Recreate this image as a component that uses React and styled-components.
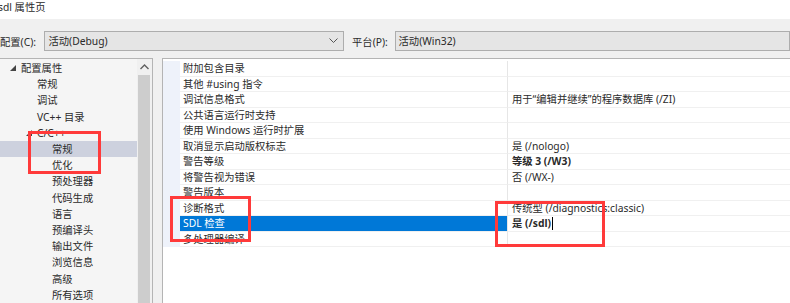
import styled, { createGlobalStyle } from "styled-components";

const GlobalStyle = createGlobalStyle`
  html, body {
    margin: 0;
    padding: 0;
    background: #f0f0f0;
    overflow: hidden;
  }
  body {
    font-family: "Noto Sans", "Noto Sans CJK SC", sans-serif;
    font-size: 10.3px;
    color: #2a2a2a;
  }
`;

const Window = styled.div`
  position: relative;
  width: 790px;
  height: 303px;
  overflow: hidden;
  background: #f0f0f0;
`;

const TitleBar = styled.div`
  height: 19px;
  background: #fff;
  line-height: 14px;
  text-indent: -2px;
  white-space: nowrap;
`;

const ConfigRow = styled.div`
  display: flex;
  align-items: center;
  margin-top: 12px;
  height: 20px;
`;

const Label = styled.div`
  width: ${(p) => p.$w}px;
  padding-left: ${(p) => p.$pad || 0}px;
  box-sizing: border-box;
  white-space: nowrap;
`;

const Combo = styled.div`
  position: relative;
  box-sizing: border-box;
  width: ${(p) => p.$w}px;
  height: 20px;
  border: 1px solid #adadad;
  background: #e5e5e5;
  line-height: 18px;
  padding-left: 3px;
  white-space: nowrap;
`;

const Chevron = styled.svg`
  position: absolute;
  right: 5px;
  top: 6px;
`;

const Main = styled.div`
  display: flex;
  margin-top: 7px;
  height: 260px;
`;

const TreePanel = styled.div`
  display: flex;
  width: 153px;
  box-sizing: border-box;
  border-top: 1px solid #b4b4b4;
  border-right: 1px solid #b4b4b4;
  background: #f5f5f5;
`;

const TreeList = styled.div`
  flex: 1;
  padding-top: 1px;
`;

const TreeItem = styled.div`
  display: flex;
  align-items: center;
  height: 16.2px;
  padding-left: ${(p) => p.$indent}px;
  background: ${(p) => (p.$selected ? "#cdd1de" : "transparent")};
  white-space: nowrap;
  line-height: 16px;
`;

const Arrow = styled.svg`
  margin-left: -11px;
  margin-right: 5px;
`;

const ScrollBar = styled.div`
  display: flex;
  flex-direction: column;
  width: 15px;
  background: #f0f0f0;
`;

const ScrollBtn = styled.div`
  height: 16px;
  display: flex;
  align-items: center;
  justify-content: center;
`;

const Thumb = styled.div`
  flex: 1;
  margin: 0 2px 0 1px;
  background: #cdcdcd;
`;

const GridPanel = styled.div`
  flex: 1;
  margin-left: 9px;
  border-top: 1px solid #b4b4b4;
  border-left: 1px solid #b4b4b4;
  background: #fff;
  padding-top: 2px;
`;

const Row = styled.div`
  display: grid;
  grid-template-columns: 17px 328px 1fr;
  height: 15.5px;
  line-height: 15px;
`;

const Margin = styled.div`
  background: #eef2fa;
`;

const NameCell = styled.div`
  padding-left: 3px;
  border-bottom: 1px solid #f0f0f0;
  border-right: 1px solid #e6e6e6;
  background: ${(p) => (p.$selected ? "#0078d7" : "#fff")};
  color: ${(p) => (p.$selected ? "#fff" : "#2a2a2a")};
  white-space: nowrap;
  overflow: hidden;
`;

const ValueCell = styled.div`
  padding-left: 4px;
  border-bottom: 1px solid #f0f0f0;
  font-weight: ${(p) => (p.$bold ? 700 : 400)};
  white-space: nowrap;
  overflow: hidden;
`;

const Caret = styled.span`
  display: inline-block;
  width: 1px;
  height: 13px;
  background: #000;
  vertical-align: -3px;
  margin-left: 1px;
`;

const Mark = styled.div`
  position: absolute;
  left: ${(p) => p.$x}px;
  top: ${(p) => p.$y}px;
  width: ${(p) => p.$w}px;
  height: ${(p) => p.$h}px;
  box-sizing: border-box;
  border: 3px solid #ff3a3a;
  pointer-events: none;
`;

const tree = [
  { text: "配置属性", indent: 21, open: true },
  { text: "常规", indent: 37 },
  { text: "调试", indent: 37 },
  { text: "VC++ 目录", indent: 37 },
  { text: "C/C++", indent: 37, open: true },
  { text: "常规", indent: 52, selected: true },
  { text: "优化", indent: 52 },
  { text: "预处理器", indent: 52 },
  { text: "代码生成", indent: 52 },
  { text: "语言", indent: 52 },
  { text: "预编译头", indent: 52 },
  { text: "输出文件", indent: 52 },
  { text: "浏览信息", indent: 52 },
  { text: "高级", indent: 52 },
  { text: "所有选项", indent: 52 },
];

const props = [
  { name: "附加包含目录", value: "" },
  { name: "其他 #using 指令", value: "" },
  { name: "调试信息格式", value: "用于“编辑并继续”的程序数据库 (/ZI)" },
  { name: "公共语言运行时支持", value: "" },
  { name: "使用 Windows 运行时扩展", value: "" },
  { name: "取消显示启动版权标志", value: "是 (/nologo)" },
  { name: "警告等级", value: "等级 3 (/W3)", bold: true },
  { name: "将警告视为错误", value: "否 (/WX-)" },
  { name: "警告版本", value: "" },
  { name: "诊断格式", value: "传统型 (/diagnostics:classic)" },
  { name: "SDL 检查", value: "是 (/sdl)", bold: true, selected: true },
  { name: "多处理器编译", value: "" },
];

export default function App() {
  return (
    <>
      <GlobalStyle />
      <Window>
        <TitleBar>sdl 属性页</TitleBar>
        <ConfigRow>
          <Label $w={45}>配置(C):</Label>
          <Combo $w={303}>
            活动(Debug)
            <Chevron width="9" height="6" viewBox="0 0 9 6">
              <path d="M0.5 0.5 L4.5 4.5 L8.5 0.5" fill="none" stroke="#555" strokeWidth="1" />
            </Chevron>
          </Combo>
          <Label $w={51} $pad={8}>平台(P):</Label>
          <Combo $w={400}>活动(Win32)</Combo>
        </ConfigRow>
        <Main>
          <TreePanel>
            <TreeList>
              {tree.map((t, i) => (
                <TreeItem key={i} $indent={t.indent} $selected={t.selected}>
                  {t.open && (
                    <Arrow width="6" height="6" viewBox="0 0 6 6">
                      <path d="M6 0 L6 6 L0 6 Z" fill="#444" />
                    </Arrow>
                  )}
                  {t.text}
                </TreeItem>
              ))}
            </TreeList>
            <ScrollBar>
              <ScrollBtn>
                <svg width="9" height="6" viewBox="0 0 9 6">
                  <path d="M0.5 5 L4.5 1 L8.5 5" fill="none" stroke="#606060" strokeWidth="1.4" />
                </svg>
              </ScrollBtn>
              <Thumb />
            </ScrollBar>
          </TreePanel>
          <GridPanel>
            {props.map((p, i) => (
              <Row key={i}>
                <Margin />
                <NameCell $selected={p.selected}>{p.name}</NameCell>
                <ValueCell $bold={p.bold}>
                  {p.value}
                  {p.selected && <Caret />}
                </ValueCell>
              </Row>
            ))}
          </GridPanel>
        </Main>
        <Mark $x={28} $y={131} $w={73} $h={43} />
        <Mark $x={170} $y={196} $w={81} $h={46} />
        <Mark $x={495} $y={201} $w={110} $h={46} />
      </Window>
    </>
  );
}
